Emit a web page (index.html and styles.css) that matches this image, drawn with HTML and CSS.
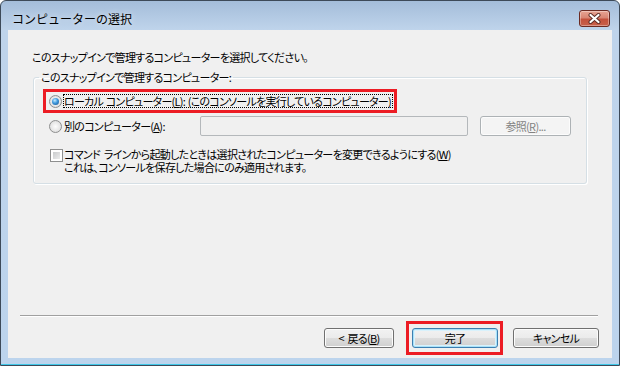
FILE: index.html
```html
<!DOCTYPE html>
<html lang="ja">
<head>
  <meta charset="UTF-8">
  <meta name="viewport" content="width=device-width, initial-scale=1.0">
  <title>コンピューターの選択</title>
  <link rel="stylesheet" href="styles.css">
</head>
<body>
  <div class="window">
    <div class="titlebar">
      <span class="title">コンピューターの選択</span>
      <button class="close" type="button" aria-label="閉じる">
        <svg width="13" height="11" viewBox="0 0 13 11">
          <path d="M2.5 2 L10.5 9 M10.5 2 L2.5 9" stroke="#5a2a24" stroke-width="4" stroke-linecap="round"/>
          <path d="M2.5 2 L10.5 9 M10.5 2 L2.5 9" stroke="#fff" stroke-width="2.2" stroke-linecap="round"/>
        </svg>
      </button>
    </div>

    <div class="client">
      <p class="intro">このスナップインで管理するコンピューターを選択してください。</p>

      <fieldset class="group">
        <legend>このスナップインで管理するコンピューター:</legend>

        <div class="mark-row">
          <span class="radio checked"></span>
          <span class="focus">ローカル コンピューター(<u>L</u>): (このコンソールを実行しているコンピューター)</span>
        </div>

        <div class="other-row">
          <span class="radio"></span>
          <span class="other-label">別のコンピューター(<u>A</u>):</span>
          <input class="field" type="text" disabled>
          <button class="btn browse" type="button" disabled>参照(<u>R</u>)...</button>
        </div>

        <div class="check-row">
          <span class="checkbox"></span>
          <div class="check-text">
            <div>コマンド ラインから起動したときは選択されたコンピューターを変更できるようにする(<u>W</u>)</div>
            <div>これは、コンソールを保存した場合にのみ適用されます。</div>
          </div>
        </div>
      </fieldset>

      <div class="separator"></div>

      <div class="footer">
        <button class="btn back" type="button">&lt; 戻る(<u>B</u>)</button>
        <span class="mark-btn"><button class="btn default" type="button">完了</button></span>
        <button class="btn cancel" type="button">キャンセル</button>
      </div>
    </div>
  </div>
</body>
</html>
```

FILE: styles.css
```css
body {
  margin: 0;
  background: #fff;
  font-family: "Noto Sans CJK JP", sans-serif;
  font-size: 11px;
  letter-spacing: -0.7px;
  word-spacing: 2px;
  font-feature-settings: "palt";
  color: #000;
}
.window {
  width: 620px;
  height: 366px;
  box-sizing: border-box;
  padding: 0 7px 7px;
  border: 1px solid #3d4a59;
  border-radius: 6px 6px 0 0;
  background: linear-gradient(#a4bdda, #bfd4eb 29px, #bcd4ed);
  box-shadow: inset 0 -1px 0 #3fc8e8;
  display: flex;
  flex-direction: column;
}
.titlebar {
  height: 29px;
  box-sizing: border-box;
  padding: 9px 2px 0 4px;
  display: flex;
  align-items: flex-start;
  justify-content: space-between;
}
.title {
  font-size: 12px;
  letter-spacing: 0;
  font-feature-settings: normal;
  line-height: 17px;
  text-shadow: 0 0 6px rgba(255, 255, 255, 0.7);
}
.close {
  width: 31px;
  height: 17px;
  padding: 0;
  border: 1px solid #6b2a22;
  border-radius: 3px;
  background: linear-gradient(#e8a493 0%, #d98674 45%, #c4513c 55%, #c8604a 100%);
  box-shadow: inset 0 0 0 1px rgba(255, 255, 255, 0.35);
  display: flex;
  align-items: center;
  justify-content: center;
}
.client {
  height: 328px;
  box-sizing: border-box;
  padding-bottom: 3px;
  background: #f0f0f0;
  display: flex;
  flex-direction: column;
}
.intro {
  margin: 19px 0 0 24px;
  line-height: 16px;
}
.group {
  margin: 5px 0 0 25px;
  width: 554px;
  height: 114px;
  box-sizing: border-box;
  padding: 0;
  min-width: 0;
  border: 1px solid #d5dfe5;
  border-radius: 3px;
  box-shadow: inset 1px 1px 0 #fff, 1px 1px 0 #fff;
}
.group legend {
  margin-left: 5px;
  padding: 0 2px;
  line-height: 14px;
}
.mark-row {
  margin: 5px 0 0 9px;
  width: 354px;
  height: 24px;
  box-sizing: border-box;
  padding-left: 3px;
  border: 3px solid #ec1c24;
  display: flex;
  align-items: center;
}
.focus {
  margin-left: 1px;
  padding-right: 1px;
  line-height: 12px;
  letter-spacing: -0.75px;
  word-spacing: 1px;
  border: 1px dotted #000;
  white-space: nowrap;
}
.radio {
  width: 13px;
  height: 13px;
  box-sizing: border-box;
  flex: none;
  border: 1px solid #8e8f8f;
  border-radius: 50%;
  background: radial-gradient(circle at 50% 50%, #fdfdfd 0, #e6e6e6 60%, #cfcfcf 100%);
  display: flex;
  align-items: center;
  justify-content: center;
}
.radio.checked::after {
  content: "";
  width: 7px;
  height: 7px;
  border-radius: 50%;
  background: radial-gradient(circle at 40% 35%, #c4ecff 0, #3c97dc 45%, #1b4f87 100%);
}
.other-row {
  margin-top: 3px;
  height: 20px;
  padding-left: 15px;
  display: flex;
  align-items: center;
}
.other-label {
  width: 136px;
  margin-left: 2px;
  white-space: nowrap;
}
.field {
  width: 268px;
  height: 20px;
  box-sizing: border-box;
  margin: 0;
  border: 1px solid #b4b8bb;
  border-radius: 2px;
  background: #f0f0f0;
}
.btn {
  height: 20px;
  box-sizing: border-box;
  padding: 0;
  font: inherit;
  letter-spacing: inherit;
  word-spacing: inherit;
  line-height: 16px;
  color: #000;
  border: 1px solid #707070;
  border-radius: 3px;
  background: linear-gradient(#f2f2f2 0%, #ebebeb 50%, #dddddd 50%, #cfcfcf 100%);
  box-shadow: inset 0 0 0 1px #fcfcfc;
}
.browse {
  width: 91px;
  margin-left: 12px;
  color: #838383;
  border-color: #adb2b5;
  background: #f4f4f4;
}
.check-row {
  margin-top: 13px;
  padding-left: 16px;
  display: flex;
  align-items: flex-start;
}
.checkbox {
  width: 13px;
  height: 13px;
  box-sizing: border-box;
  flex: none;
  border: 1px solid #8e8f8f;
  background: #fff;
  padding: 2px;
  display: flex;
}
.checkbox::after {
  content: "";
  flex: 1;
  background: linear-gradient(135deg, #c9cbcd, #eceded);
}
.check-text {
  margin: -1px 0 0 1px;
  line-height: 13px;
  white-space: nowrap;
}
.separator {
  margin: auto 0 0 12px;
  width: 578px;
  border-top: 1px solid #a0a0a0;
  border-bottom: 1px solid #fff;
}
.footer {
  margin-top: 4px;
  padding-right: 13px;
  display: flex;
  justify-content: flex-end;
  align-items: center;
}
.back {
  width: 70px;
}
.mark-btn {
  margin-left: 12px;
  padding: 4px 2px 4px 3px;
  border: 3px solid #ec1c24;
  display: flex;
}
.default {
  width: 86px;
  border-color: #3c7fb1;
  box-shadow: inset 0 0 0 1px #a9e1f8, inset 0 0 0 2px #d9f2fc;
}
.cancel {
  width: 86px;
  margin-left: 10px;
}
```
